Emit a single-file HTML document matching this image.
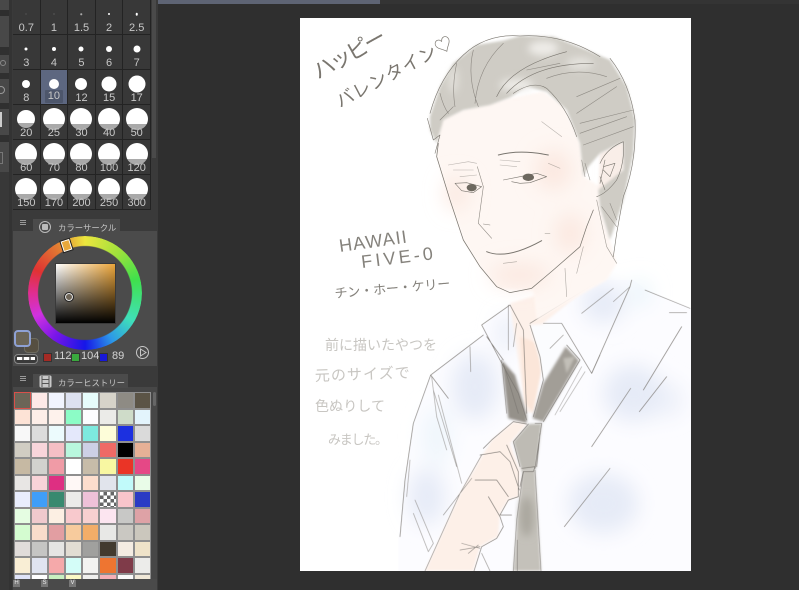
<!DOCTYPE html>
<html lang="ja"><head><meta charset="utf-8"><title>Canvas</title>
<style>
html,body{margin:0;padding:0;background:#2f2f2f;width:799px;height:590px;overflow:hidden}
body{position:relative;font-family:"Liberation Sans","Noto Sans CJK JP",sans-serif}
.a{position:absolute}
#brush{position:absolute;left:13px;top:0;width:138px;height:210px;display:grid;grid-template-columns:repeat(5,1fr);grid-template-rows:repeat(6,35px);background:#383838}
#brush div{position:relative;border-right:1px solid #232323;border-bottom:1px solid #232323;box-sizing:border-box;color:#c8c8c8;font-size:11px;text-align:center;overflow:hidden}
#brush span{position:absolute;left:0;right:0;bottom:-1px;line-height:13px;z-index:2}
#brush i{position:absolute;left:50%;border-radius:50%;background:#fff;transform:translate(-50%,-50%)}
#brush i.b{width:22px;height:22px;top:14px;background:linear-gradient(#fff 0,#fff 72%,#a9a9a9 72%,#a9a9a9 100%)}
#hist{position:absolute;left:14px;top:392px;width:137px;height:187px;display:grid;grid-template-columns:repeat(8,17.1px);grid-auto-rows:16.5px;overflow:hidden;background:#8b8b8b}
#hist b{display:block;border:.5px solid #8f8f8f;box-sizing:border-box}
.jp{font-size:8.4px;color:#c4c4c4;white-space:nowrap}
</style></head><body>

<!-- top strip -->
<div class="a" style="left:158px;top:0;width:222px;height:4px;background:#5e6474"></div>
<div class="a" style="left:380px;top:0;width:419px;height:4px;background:#343434"></div>

<!-- left toolbar -->
<div class="a" style="left:0;top:0;width:12px;height:590px;background:#333"></div>
<div class="a" style="left:0;top:0;width:9px;height:172px;background:#484848"></div>
<div class="a" style="left:0;top:10px;width:9px;height:6px;background:#2e2e2e"></div>
<div class="a" style="left:0;top:47px;width:9px;height:8px;background:#303030"></div>
<div class="a" style="left:0;top:73px;width:9px;height:6px;background:#303030"></div>
<div class="a" style="left:0;top:103px;width:9px;height:6px;background:#303030"></div>
<div class="a" style="left:0;top:135px;width:9px;height:7px;background:#303030"></div>
<div class="a" style="left:0;top:172px;width:9px;height:418px;background:#383838"></div>
<div class="a" style="left:0;top:60px;width:4px;height:4px;border:1px solid #888;border-radius:50%"></div>
<div class="a" style="left:-3px;top:86px;width:6px;height:6px;border:1px solid #999;border-radius:50%"></div>
<div class="a" style="left:0;top:112px;width:2px;height:15px;background:#ccc"></div>
<div class="a" style="left:-3px;top:152px;width:4px;height:10px;border:1px solid #777"></div>

<!-- panel -->
<div class="a" style="left:12px;top:0;width:146px;height:590px;background:#3a3a3a"></div>
<div class="a" style="left:152px;top:0;width:4px;height:158px;background:#4a4a4a"></div>

<div id="brush">
<div><i style="left:50%;top:14px;width:1px;height:1px;background:#777"></i><span>0.7</span></div>
<div><i style="top:14px;width:1px;height:1px;background:#888"></i><span>1</span></div>
<div><i style="top:14px;width:1.5px;height:1.5px;background:#aaa"></i><span>1.5</span></div>
<div><i style="top:14px;width:2px;height:2px"></i><span>2</span></div>
<div><i style="top:14px;width:2.5px;height:2.5px"></i><span>2.5</span></div>
<div><i style="top:14px;width:3px;height:3px"></i><span>3</span></div>
<div><i style="top:14px;width:4px;height:4px"></i><span>4</span></div>
<div><i style="top:14px;width:5px;height:5px"></i><span>5</span></div>
<div><i style="top:14px;width:6px;height:6px"></i><span>6</span></div>
<div><i style="top:14px;width:7px;height:7px"></i><span>7</span></div>
<div><i style="top:14px;width:8px;height:8px"></i><span>8</span></div>
<div style="background:#5d6780"><i style="top:14px;width:10px;height:10px"></i><span style="left:4px;right:4px;bottom:1px;background:#4d566b;border-radius:1px">10</span></div>
<div><i style="top:14px;width:12px;height:12px"></i><span>12</span></div>
<div><i style="top:14px;width:15px;height:15px"></i><span>15</span></div>
<div><i style="top:14px;width:17px;height:17px"></i><span>17</span></div>
<div><i class="b" style="width:18px;height:18px;top:14px"></i><span>20</span></div>
<div><i class="b"></i><span>25</span></div>
<div><i class="b"></i><span>30</span></div>
<div><i class="b"></i><span>40</span></div>
<div><i class="b"></i><span>50</span></div>
<div><i class="b"></i><span>60</span></div>
<div><i class="b"></i><span>70</span></div>
<div><i class="b"></i><span>80</span></div>
<div><i class="b"></i><span>100</span></div>
<div><i class="b"></i><span>120</span></div>
<div><i class="b"></i><span>150</span></div>
<div><i class="b"></i><span>170</span></div>
<div><i class="b"></i><span>200</span></div>
<div><i class="b"></i><span>250</span></div>
<div><i class="b"></i><span>300</span></div>
</div>

<!-- colour circle panel -->
<div class="a" style="left:13px;top:231px;width:144px;height:135px;background:#4b4b4b"></div>
<div class="a" style="left:33px;top:219px;width:87px;height:13px;background:#4b4b4b"></div>
<div class="a" style="left:20px;top:220px;width:6px;height:1px;background:#999;box-shadow:0 2px 0 #999,0 4px 0 #999"></div>
<div class="a" style="left:39px;top:221px;width:10px;height:10px;border:1px solid #bbb;border-radius:50%"></div>
<div class="a" style="left:42px;top:224px;width:6px;height:6px;background:#bbb;border-radius:1px"></div>
<div class="a jp" style="left:58px;top:222px">カラーサークル</div>

<div class="a" style="left:28px;top:236px;width:114px;height:114px;border-radius:50%;background:conic-gradient(from 0deg,#ece63e 0deg,#9ee23c 40deg,#40e04c 75deg,#40e0b8 120deg,#2c98e8 150deg,#1616e8 180deg,#7a16e8 215deg,#d032e0 245deg,#e02e90 270deg,#e03232 295deg,#e27e32 330deg,#ece63e 360deg);-webkit-mask:radial-gradient(circle,transparent 46.5px,#000 47.5px);mask:radial-gradient(circle,transparent 46.5px,#000 47.5px)"></div>
<div class="a" style="left:62px;top:240px;width:9px;height:11px;background:#e8a83c;border:1.5px solid #fff;outline:1px solid #222;transform:rotate(-18deg);box-sizing:border-box"></div>
<div class="a" style="left:56px;top:264px;width:59px;height:59px;background:linear-gradient(to top,#000,rgba(0,0,0,0)),linear-gradient(to right,#fff,#eca63a);outline:1px solid #3a3a3a"></div>
<div class="a" style="left:65px;top:293px;width:6px;height:6px;border:1.2px solid #e8e8e8;border-radius:50%;background:#6e6557;outline:.5px solid #222"></div>

<div class="a" style="left:24px;top:338px;width:13px;height:13px;border:1.5px solid #6c6a5f;border-radius:4px;background:#564f41"></div>
<div class="a" style="left:14px;top:330px;width:13px;height:13px;border:2px solid #8ea1d4;border-radius:4px;background:#6b6557"></div>
<div class="a" style="left:14px;top:354px;width:22px;height:8px;border:1px solid #888;border-radius:4px;background:#3a3a3a"></div>
<div class="a" style="left:17px;top:357px;width:18px;height:3px;background:repeating-linear-gradient(90deg,#fff 0 5px,#777 5px 7px)"></div>
<div class="a" style="left:44px;top:354px;width:7px;height:7px;background:#a52a24;outline:1px solid #333"></div>
<div class="a" style="left:54px;top:350px;font-size:11px;color:#d4d4d4">112</div>
<div class="a" style="left:72px;top:354px;width:7px;height:7px;background:#3aa83e;outline:1px solid #333"></div>
<div class="a" style="left:81px;top:350px;font-size:11px;color:#d4d4d4">104</div>
<div class="a" style="left:100px;top:354px;width:7px;height:7px;background:#1818d8;outline:1px solid #333"></div>
<div class="a" style="left:112px;top:350px;font-size:11px;color:#d4d4d4">89</div>
<svg class="a" style="left:135px;top:345px" width="15" height="15" viewBox="0 0 15 15"><circle cx="7.500" cy="7.500" r="6" fill="none" stroke="#c8c8c8"/><path d="M5.500 4l5.500 3.500-5.500 3.500z" fill="none" stroke="#c8c8c8"/></svg>

<!-- colour history -->
<div class="a" style="left:13px;top:387px;width:144px;height:203px;background:#474747"></div>
<div class="a" style="left:33px;top:374px;width:95px;height:14px;background:#4b4b4b"></div>
<div class="a" style="left:20px;top:376px;width:6px;height:1px;background:#999;box-shadow:0 2px 0 #999,0 4px 0 #999"></div>
<svg class="a" style="left:39px;top:375px" width="13" height="13" viewBox="0 0 13 13"><rect x=".5" y=".5" width="12" height="12" rx="1.500" fill="#c8c8c8"/><path d="M3 1v11M10 1v11M3 4.500h7M3 8.500h7" stroke="#555" fill="none"/></svg>
<div class="a jp" style="left:58px;top:377px">カラーヒストリー</div>

<div id="hist">
<b style="background:#6b6557;outline:1px solid #d9504a;outline-offset:-1px"></b><b style="background:#fde9e7"></b><b style="background:#f1f4fe"></b><b style="background:#dde1f0"></b><b style="background:#e6fcfb"></b><b style="background:#d6d3c9"></b><b style="background:#8e8b84"></b><b style="background:#5b5446"></b>
<b style="background:#fde3d6"></b><b style="background:#fdeee8"></b><b style="background:#fef2ec"></b><b style="background:#8cfcc6"></b><b style="background:#fcfcff"></b><b style="background:#ebebe8"></b><b style="background:#cfdcc9"></b><b style="background:#e3f4fc"></b>
<b style="background:#f8f8f8"></b><b style="background:#dcdcdc"></b><b style="background:#ecfbfd"></b><b style="background:#e4e8fb"></b><b style="background:#7de9df"></b><b style="background:#fdfdd9"></b><b style="background:#1c30e0"></b><b style="background:#dadada"></b>
<b style="background:#d1cdc3"></b><b style="background:#f8d5db"></b><b style="background:#f5bfc5"></b><b style="background:#b9f7de"></b><b style="background:#cdd0e6"></b><b style="background:#ef6a66"></b><b style="background:#000"></b><b style="background:#e6b096"></b>
<b style="background:#c6b9a3"></b><b style="background:#d2d2ce"></b><b style="background:#f09ba6"></b><b style="background:#fff"></b><b style="background:#c7bca9"></b><b style="background:#f8f7a2"></b><b style="background:#ea3426"></b><b style="background:#e54886"></b>
<b style="background:#e8e6e4"></b><b style="background:#f8d3d8"></b><b style="background:#de2f82"></b><b style="background:#fff8f6"></b><b style="background:#fcddcd"></b><b style="background:#e1e4ec"></b><b style="background:#c1fafa"></b><b style="background:#e9fce8"></b>
<b style="background:#e9edfd"></b><b style="background:#409ef8"></b><b style="background:#38896f"></b><b style="background:#ebebe9"></b><b style="background:#eec1d8"></b><b style="background:repeating-conic-gradient(#666 0 25%,#fff 0 50%) 0 0/7px 7px"></b><b style="background:#f9c5cb"></b><b style="background:#2b3bc4"></b>
<b style="background:#e5fde2"></b><b style="background:#f0c9cd"></b><b style="background:#fcefe3"></b><b style="background:#f8c9cd"></b><b style="background:#f7d0d0"></b><b style="background:#fce5f0"></b><b style="background:#c8c8c6"></b><b style="background:#dea2a6"></b>
<b style="background:#d4fcd0"></b><b style="background:#f9dccb"></b><b style="background:#e29ea2"></b><b style="background:#f7cb9d"></b><b style="background:#f2ad68"></b><b style="background:#e8e8e6"></b><b style="background:#cac8c2"></b><b style="background:#cbc7bd"></b>
<b style="background:#e1dcda"></b><b style="background:#c5c5c3"></b><b style="background:#e5e5e3"></b><b style="background:#e2ddd3"></b><b style="background:#a0a09e"></b><b style="background:#423a2e"></b><b style="background:#f4ece2"></b><b style="background:#efe3c9"></b>
<b style="background:#f9eed5"></b><b style="background:#e0e4f0"></b><b style="background:#f5a9aa"></b><b style="background:#d4fdf8"></b><b style="background:#f3f3f1"></b><b style="background:#ee7531"></b><b style="background:#7f3b49"></b><b style="background:#ececea"></b>
<b style="background:#dfe3f8"></b><b style="background:#fff"></b><b style="background:#c8f0c0"></b><b style="background:#fbf9c5"></b><b style="background:#f0f0ee"></b><b style="background:#f5b0b8"></b><b style="background:#fafafa"></b><b style="background:#f0e8d8"></b>
</div>
<div class="a" style="left:153px;top:392px;width:3px;height:14px;background:#666;border-radius:2px"></div>
<div class="a" style="left:13px;top:579px;width:144px;height:11px;background:#4a4a4a"></div>
<div class="a" style="left:13px;top:580px;width:7px;height:7px;background:#777;color:#eee;font-size:6px;line-height:7px;text-align:center">H</div>
<div class="a" style="left:41px;top:580px;width:7px;height:7px;background:#777;color:#eee;font-size:6px;line-height:7px;text-align:center">S</div>
<div class="a" style="left:69px;top:580px;width:7px;height:7px;background:#777;color:#eee;font-size:6px;line-height:7px;text-align:center">V</div>

<!-- canvas -->
<div class="a" style="left:300px;top:18px;width:391px;height:553px;background:#fff"></div>
<svg class="a" style="left:0;top:0" width="799" height="590" viewBox="0 0 799 590">
<defs>
<clipPath id="cv"><rect x="300" y="18" width="391" height="553"/></clipPath>
<filter id="bl" x="-20%" y="-20%" width="140%" height="140%"><feGaussianBlur stdDeviation="4"/></filter>
<filter id="bl2" x="-60%" y="-60%" width="220%" height="220%"><feGaussianBlur stdDeviation="30"/></filter>
<filter id="bl3" x="-40%" y="-40%" width="180%" height="180%"><feGaussianBlur stdDeviation="12"/></filter>
<filter id="ln" x="-10%" y="-10%" width="120%" height="120%"><feGaussianBlur stdDeviation="0.8"/></filter>
</defs>
<g clip-path="url(#cv)">

<!-- handwriting -->
<g>
<text x="318" y="80" font-size="22" transform="rotate(-29 318 80)" fill="#7a766f" textLength="80" lengthAdjust="spacing">ハッピー</text>
<text x="340" y="108" font-size="18" transform="rotate(-28 340 108)" fill="#7a766f" textLength="130" lengthAdjust="spacing">バレンタイン♡</text>
<text x="340" y="252" font-size="18" transform="rotate(-8 340 252)" fill="#85827c" textLength="68" lengthAdjust="spacing">HAWAII</text>
<text x="362" y="268" font-size="18" transform="rotate(-7 362 268)" fill="#85827c" textLength="72" lengthAdjust="spacing">FIVE-0</text>
<text x="335" y="298" font-size="13" transform="rotate(-5 335 298)" fill="#85827c" textLength="116" lengthAdjust="spacing">チン・ホー・ケリー</text>
<text x="325" y="350" font-size="14" fill="#c8c6c2" textLength="112" lengthAdjust="spacing">前に描いたやつを</text>
<text x="315" y="381" font-size="15" transform="rotate(-2 315 381)" fill="#c8c6c2" textLength="95" lengthAdjust="spacing">元のサイズで</text>
<text x="315" y="411" font-size="14" fill="#c8c6c2" textLength="70" lengthAdjust="spacing">色ぬりして</text>
<text x="328" y="444" font-size="13" fill="#c8c6c2" textLength="60" lengthAdjust="spacing">みました。</text>
</g>

<!-- shirt & lower body, zoom-5 coordinates -->
<g transform="translate(400 280) scale(.33333)">
<path d="M90 285L250 165 250 135 330 75 400 130 600 0 700 0 740 30 875 85V875H-5V770L40 430Z" fill="#fcfcff"/>
<g filter="url(#bl2)" fill="#e6ebf7">
<ellipse cx="225" cy="320" rx="70" ry="100"/>
<ellipse cx="610" cy="70" rx="65" ry="60"/>
<ellipse cx="700" cy="340" rx="90" ry="85"/>
<ellipse cx="800" cy="360" rx="55" ry="55" opacity=".6"/>
<ellipse cx="610" cy="670" rx="105" ry="90"/>
<ellipse cx="80" cy="650" rx="55" ry="85"/>
<ellipse cx="320" cy="160" rx="25" ry="55"/>
<ellipse cx="110" cy="470" rx="45" ry="90" fill="#eff6fc"/>
<ellipse cx="720" cy="40" rx="30" ry="40" fill="#e9f5fb"/>
</g>
<!-- neck -->
<path d="M330 70L600 -10 430 130 420 260 400 400 378 395 350 210Z" fill="#fdf1ea" filter="url(#bl)"/>
<path d="M360 170L415 190 425 270 398 395 375 370Z" fill="#fbe6d9" filter="url(#bl)"/>
<path d="M390 135L490 130 540 240 500 205 430 320 420 240Z" fill="#fbfcfe" filter="url(#bl)"/>
<!-- tie -->
<path d="M305 240L345 285 380 405 380 430 325 415Z" fill="#95918a" filter="url(#bl)"/>
<path d="M497 200L537 242 430 425 398 415 430 310Z" fill="#a29e97" filter="url(#bl)"/>
<path d="M490 235L525 230 500 280Z" fill="#c2bfb8" filter="url(#bl)"/>
<path d="M340 485L385 432 425 430 408 565 365 575Z" fill="#bebbb4" filter="url(#bl)"/>
<path d="M368 570L405 565 423 873H340L352 720Z" fill="#c4c1ba" filter="url(#bl)"/>
<ellipse cx="380" cy="710" rx="20" ry="60" fill="#aaa79f" filter="url(#bl3)"/>
<!-- hand -->
<path d="M275 480L340 425 380 432 330 490 360 570 358 650 325 660 300 700 295 770 240 800 220 873H75L180 640 245 530Z" fill="#fdf0e8" filter="url(#bl)"/>
<g fill="none" stroke="#77736e" stroke-width="1.800" stroke-linecap="round" stroke-linejoin="round" filter="url(#ln)">
<path d="M92 285L250 165M92 285L145 355M92 285L40 430 15 600 0 770"/>
<path d="M100 330L170 560M115 345L185 610M95 290L110 410 140 510M30 540L20 650M45 660L100 790 85 815 40 700" opacity=".7"/>
<path d="M245 135L330 75M245 135L300 240 355 340 380 420M260 170L310 240"/>
<path d="M330 75L370 150 380 400M390 135L420 230 430 300 400 410"/>
<path d="M390 130L600 0M415 100L600 -10M430 130H485L575 280 690 20 695 0M500 195L540 240 430 425"/>
<path d="M575 280L600 225M545 100L640 25M640 65L690 20M450 205L490 165M735 30L870 85M808 98H860" opacity=".8"/>
<path d="M730 330L845 140M718 395L800 290M575 500L692 325M493 740L630 565"/>
<path d="M465 405L545 260M480 395L555 275" opacity=".6"/>
<path d="M305 240L320 400M310 250L355 400M325 75L325 210M350 130L340 200M210 200L212 275" opacity=".8"/>
<path d="M405 430H425L405 565M385 432L340 485 360 560M420 460L410 560M365 565L405 560 400 575H370L360 620"/>
<path d="M370 575L350 720 340 873M405 570L423 873M352 780V873" opacity=".8"/>
<path d="M380 432L340 425 275 480 250 505M320 495L355 575 355 650 325 660 300 705 335 705M240 525L300 515 330 545 358 630M225 600L290 600 325 650M265 650L300 710 310 740 290 775 245 800 222 873"/>
<path d="M245 525L180 640 75 873M215 595L130 705M185 790L240 805M205 820L235 795M180 810L240 800M245 820L270 873" opacity=".8"/>
</g>
</g>

<!-- head, zoom-4 coordinates -->
<g transform="translate(420 20) scale(.33333)">
<!-- face -->
<path d="M60 300L50 410 90 540 130 660 180 740 235 805 340 810 350 900 420 860 560 780 590 730 540 560 540 500 490 470 480 370 430 260 370 215 270 235 130 270Z" fill="#fef7f3" filter="url(#bl)"/>
<g filter="url(#bl2)" fill="#fbe8e0">
<ellipse cx="400" cy="450" rx="55" ry="60"/>
<ellipse cx="110" cy="520" rx="35" ry="50"/>
<ellipse cx="300" cy="765" rx="90" ry="35"/>
<ellipse cx="450" cy="640" rx="45" ry="60"/>
</g>
<!-- ear -->
<path d="M540 400L610 365 610 450 570 510 535 510Z" fill="#f9eee8" filter="url(#bl)"/>
<!-- hair -->
<path d="M30 290L60 200 100 130 170 75 250 62 300 48 400 50 500 90 570 120 620 200 645 300 640 400 610 540 570 660 540 560 535 510 610 450 610 365 540 400 505 440 490 470 480 370 440 270 380 215 320 200 270 232 210 255 130 270 70 300 50 370 30 330Z" fill="#cfccc5" filter="url(#bl)"/>
<g filter="url(#bl3)" fill="#eeece8">
<ellipse cx="370" cy="85" rx="45" ry="22"/>
<ellipse cx="290" cy="195" rx="50" ry="18"/>
<ellipse cx="100" cy="180" rx="15" ry="40" opacity=".6"/>
<ellipse cx="480" cy="130" rx="40" ry="18" opacity=".7"/>
</g>
<g fill="none" stroke="#7a766f" stroke-width="1.800" stroke-linecap="round" stroke-linejoin="round" filter="url(#ln)">
<path d="M30 280Q60 170 130 105T300 48Q430 40 540 110"/>
<path d="M570 115Q630 190 645 300 650 430 610 530L590 640 580 710M22 295L40 360 60 345 45 400"/>
<path d="M60 220Q70 260 85 280M60 300Q90 270 100 260M110 130Q95 200 105 260M160 90Q140 170 175 260M250 70Q175 140 165 250" opacity=".8"/>
<path d="M230 230Q270 140 440 95M260 220Q340 130 520 130M280 220Q340 180 380 205 440 260 470 350"/>
<path d="M320 150L420 130M380 175Q470 140 560 170M470 230L600 175M470 280L590 200M480 310L640 270M480 340L620 290M490 375L640 320" opacity=".75"/>
<path d="M495 430L510 480M485 420L495 470" opacity=".7"/>
<path d="M540 430Q560 385 610 365 615 430 590 480 560 520 530 530M555 420L540 490M550 440L585 430 570 470 550 450M540 470L555 510"/>
<path d="M55 370L50 410 90 540 130 660 180 740 230 800 270 818 335 805 400 750 480 680 500 620 520 570" stroke-width="2.200"/>
<path d="M435 745L440 830M490 680L470 760" opacity=".6"/>
<path d="M530 540L560 680 590 730M545 560L590 620M570 550L590 600" opacity=".7"/>
<path d="M200 695Q260 720 365 662" stroke-width="3"/>
<path d="M375 640H390M250 730L290 725" opacity=".6"/>
<path d="M172 440L190 500 175 610 215 655M190 612L210 615" opacity=".85"/>
<path d="M365 305L425 350" opacity=".5"/>
<path d="M85 435L145 425 170 430M100 450L160 450M120 470L170 465M240 420L300 425M240 435L290 440M385 430L420 445" opacity=".5"/>
<path d="M250 480L300 470 350 460 380 470 330 488 300 490 275 485M105 490L140 488 185 500 160 518 125 512Z"/>
<path d="M235 405Q300 388 385 405" stroke-width="3"/>
</g>
<g fill="#6d685f" filter="url(#ln)">
<ellipse cx="325" cy="472" rx="17" ry="11"/>
<ellipse cx="155" cy="503" rx="15" ry="11"/>
</g>
</g>
</g>
</svg>
</body></html>
